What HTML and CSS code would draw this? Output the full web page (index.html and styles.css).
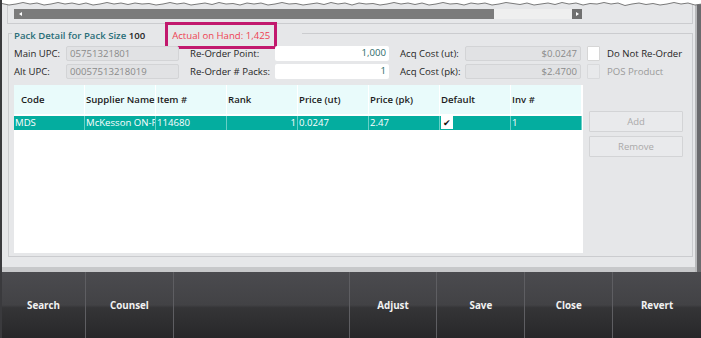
FILE: index.html
```html
<!DOCTYPE html>
<html lang="en">
  <head>
    <meta charset="UTF-8" />
    <title>Pack Detail</title>
    <link rel="stylesheet" href="styles.css">
  </head>
  <body>
    <div class="window">
      <svg class="torn" width="701" height="8" viewBox="0 0 701 8">
        <polyline points="-1,-1 702,-1 702,4 695,5 688,3 681,4 674,2.5 667,4 660,5 653,3.5 646,4.5 639,3 632,4 625,5.5 618,3 611,4 604,2.5 597,4 590,3.5 583,5 576,3 569,4 562,2.5 555,4.5 548,3 541,4 534,5 527,3 520,4.5 513,3.5 506,2.5 499,4 492,5 485,3 478,4 471,3 464,5 457,3.5 450,4 443,2.5 436,4 429,5 422,3 415,4.5 408,3 401,4 394,2.5 387,4 380,5 373,3.5 366,4 359,3 352,5 345,3 338,4 331,2.5 324,4.5 317,3 310,4 303,5 296,3.5 289,4 282,2.5 275,4 268,5 261,3 254,4 247,3 240,5 233,3.5 226,4 219,2.5 212,4.5 205,3 198,4 191,5 184,3 177,4 170,2.5 163,4 156,5 149,3.5 142,4 135,3 128,4.5 121,3 114,4 107,2.5 100,4 93,5 86,3 79,4.5 72,3 65,4 58,2.5 51,4 44,5 37,3 30,4 23,2.5 16,4 9,5 2,3.5 -1,4" fill="#ffffff" stroke="#5a5a5a" stroke-width="0.8" />
      </svg>

      <div class="main">
        <div class="top-pane">
          <div class="hscroll">
            <div class="hscroll-thumb"><span class="arrow-left"></span></div>
            <div class="hscroll-track"></div>
            <div class="hscroll-btn"><span class="arrow-right"></span></div>
          </div>
        </div>

        <div class="group">
          <div class="group-head">
            <span class="group-title">Pack Detail for Pack Size <b>100</b></span>
            <span class="on-hand">Actual on Hand: 1,425</span>
          </div>

          <div class="form">
            <label>Main UPC:</label>
            <div class="field disabled">05751321801</div>
            <label class="pad">Re-Order Point:</label>
            <div class="field edit">1,000</div>
            <label class="pad">Acq Cost (ut):</label>
            <div class="field disabled right">$0.0247</div>
            <div class="check-cell"><span class="check"></span></div>
            <label>Do Not Re-Order</label>

            <label>Alt UPC:</label>
            <div class="field disabled">00057513218019</div>
            <label class="pad">Re-Order # Packs:</label>
            <div class="field edit">1</div>
            <label class="pad">Acq Cost (pk):</label>
            <div class="field disabled right">$2.4700</div>
            <div class="check-cell"><span class="check off"></span></div>
            <label class="muted">POS Product</label>
          </div>

          <div class="lower">
            <div class="table">
              <div class="th first">Code</div>
              <div class="th">Supplier Name</div>
              <div class="th">Item #</div>
              <div class="th">Rank</div>
              <div class="th">Price (ut)</div>
              <div class="th">Price (pk)</div>
              <div class="th">Default</div>
              <div class="th">Inv #</div>

              <div class="td">MDS</div>
              <div class="td">McKesson ON-R</div>
              <div class="td">114680</div>
              <div class="td num">1</div>
              <div class="td">0.0247</div>
              <div class="td">2.47</div>
              <div class="td"><span class="tick">&#10004;</span></div>
              <div class="td">1</div>
            </div>

            <div class="side">
              <button class="side-btn" disabled>Add</button>
              <button class="side-btn" disabled>Remove</button>
            </div>
          </div>
        </div>
      </div>

      <div class="toolbar">
        <button class="tool">Search</button>
        <button class="tool">Counsel</button>
        <div class="tool blank"></div>
        <button class="tool">Adjust</button>
        <button class="tool">Save</button>
        <button class="tool">Close</button>
        <button class="tool">Revert</button>
      </div>
    </div>
  </body>
</html>
```

FILE: styles.css
```css
:root {
  --panel: #e6e7e9;
  --line: #cbcccf;
  --teal: #04ad9f;
  --text: #262626;
}

* {
  box-sizing: border-box;
}

body {
  margin: 0;
  font-family: "Open Sans", "Noto Sans", sans-serif;
  font-size: 9.6px;
  color: var(--text);
  background: #ffffff;
}

.window {
  position: relative;
  width: 701px;
  height: 338px;
  display: flex;
  flex-direction: column;
  overflow: hidden;
  border-left: 2px solid #3a3a3d;
}

/* torn paper edge over the top of the shot */
.torn {
  position: absolute;
  top: 0;
  left: -2px;
  z-index: 2;
}

.main {
  flex: 0 0 272px;
  background: var(--panel);
  border-right: 4px solid #6a6a6d;
  box-shadow: inset -2px 0 #b8b9bb, inset 0 -5px #c7c8ca;
}

.top-pane {
  height: 24px;
  margin: 0 4px 0 5px;
  border: 1px solid var(--line);
  border-top: none;
  padding: 9px 0 0 6px;
}

.hscroll {
  display: flex;
  width: 568px;
  height: 10px;
}

.hscroll-thumb {
  width: 480px;
  background: #7b7b7b;
  display: flex;
  align-items: center;
  padding-left: 5px;
}

.hscroll-track {
  flex: 1;
  background: #efefef;
}

.hscroll-btn {
  width: 10px;
  background: #707070;
  display: flex;
  align-items: center;
  justify-content: center;
}

.arrow-left,
.arrow-right {
  width: 0;
  height: 0;
  border-top: 2.5px solid transparent;
  border-bottom: 2.5px solid transparent;
}

.arrow-left {
  border-right: 3px solid #ffffff;
}

.arrow-right {
  border-left: 3px solid #ffffff;
}

.group {
  margin: 9px 4px 0 6px;
  height: 224px;
  border: 1px solid var(--line);
  padding: 0 5px 2px 5px;
}

.group-head {
  display: flex;
  align-items: center;
  width: 290px;
  height: 14px;
  margin: -6px 0 0 -2px;
  padding-left: 2px;
  background: var(--panel);
}

.group-title {
  color: #2a6e78;
  font-weight: 600;
}

.group-title b {
  color: #1e1e1e;
  font-weight: 600;
}

.on-hand {
  display: inline-block;
  margin-left: 26px;
  padding: 1px 1px 0;
  line-height: 14px;
  color: #ee3f52;
  outline: 3px solid #c2186d;
  outline-offset: 3px;
}

.form {
  display: grid;
  grid-template-columns: 52px 113px 96px 114px 76px 116px 26px auto;
  grid-auto-rows: 15px;
  row-gap: 3px;
  margin-top: 4px;
  align-items: center;
}

.form label {
  white-space: nowrap;
}

.form label.pad {
  padding-left: 11px;
}

.form label.muted {
  color: #9b9b9b;
}

.field {
  height: 15px;
  line-height: 14px;
  padding: 0 3px;
  border-radius: 2px;
  white-space: nowrap;
  overflow: hidden;
}

.field.disabled {
  background: #e1e2e4;
  border: 1px solid #d3d4d6;
  color: #8a8a8a;
}

.field.edit {
  background: #ffffff;
  text-align: right;
  color: #2b6a6a;
}

.field.right {
  text-align: right;
}

.check-cell {
  padding-left: 6px;
}

.check {
  display: block;
  width: 13px;
  height: 15px;
  background: #ffffff;
  border: 1px solid #d6d6d6;
  border-radius: 1px;
}

.check.off {
  background: #e8e9eb;
  border-color: #d9dadc;
}

.lower {
  display: flex;
  gap: 6px;
  margin-top: 6px;
}

.table {
  width: 569px;
  height: 168px;
  background: #ffffff;
  display: grid;
  grid-template-columns: repeat(8, 71px);
  grid-template-rows: 29px 14px;
  row-gap: 2px;
  align-content: start;
}

.th {
  background: #e9fbfb;
  border-right: 1px solid #ffffff;
  padding-left: 1px;
  display: flex;
  align-items: center;
  font-weight: 600;
  color: #1c1c1c;
  white-space: nowrap;
  overflow: hidden;
}

.th.first {
  padding-left: 7px;
}

.td {
  background: var(--teal);
  color: #ffffff;
  border-right: 1px solid #68cfc6;
  line-height: 14px;
  padding-left: 1px;
  white-space: nowrap;
  overflow: hidden;
}

.td.num {
  text-align: right;
  padding-right: 1px;
}

.tick {
  display: inline-block;
  vertical-align: top;
  width: 12px;
  height: 13px;
  background: #ffffff;
  color: #111111;
  font-size: 9px;
  text-align: center;
  line-height: 13px;
}

.side {
  width: 94px;
  padding-top: 26px;
  display: flex;
  flex-direction: column;
  gap: 4px;
}

.side-btn {
  height: 21px;
  font-family: inherit;
  font-size: 9.5px;
  color: #a9a9a9;
  background: #e9eaec;
  border: 1px solid #d3d4d6;
  border-radius: 1px;
}

.toolbar {
  flex: 1;
  display: grid;
  grid-template-columns: 84px repeat(7, 1fr);
  background: linear-gradient(#4b4b4f 0%, #424245 50%, #353537 54%, #272729 100%);
}

.tool {
  border: none;
  border-right: 1px solid #5e5e62;
  background: transparent;
  color: #f2f2f2;
  font-family: inherit;
  font-size: 9.8px;
  font-weight: 700;
  padding: 0;
}

.tool.blank {
  grid-column: span 2;
}

.tool:last-child {
  border-right: none;
}
```
